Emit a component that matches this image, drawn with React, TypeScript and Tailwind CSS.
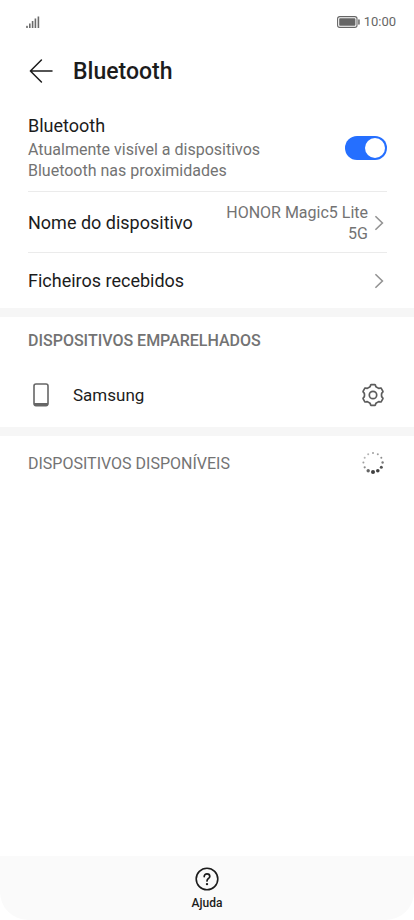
import { useState } from "react";

// Outline of the six-toothed gear, as [angle, radius] pairs for one tooth
const TOOTH: [number, number][] = [
  [-14, 10.1],
  [-10, 10.6],
  [10, 10.6],
  [14, 10.1],
  [18, 9],
  [23, 8.6],
  [37, 8.6],
  [42, 9],
];

const gearPoints = [0, 60, 120, 180, 240, 300]
  .flatMap((turn) =>
    TOOTH.map(([angle, radius]) => {
      const a = ((turn + angle) * Math.PI) / 180;
      return `${(12 + radius * Math.sin(a)).toFixed(2)},${(12 - radius * Math.cos(a)).toFixed(2)}`;
    }),
  )
  .join(" ");

// Dot sizes and opacities, clockwise from the top
const DOTS = [
  [1, 0.5],
  [1, 0.5],
  [1, 0.6],
  [1.2, 0.7],
  [1.5, 0.9],
  [1.8, 1],
  [2, 1],
  [1.7, 0.8],
  [1.1, 0.6],
  [1, 0.5],
  [1, 0.4],
  [1, 0.4],
];

function SignalIcon() {
  return (
    <svg width="14" height="12" viewBox="0 0 14 12" fill="#6b6b6b" aria-hidden="true">
      <rect x="0.2" y="9.8" width="1.6" height="2.2" />
      <rect x="3" y="7.5" width="1.6" height="4.5" />
      <rect x="5.8" y="5" width="1.6" height="7" />
      <rect x="8.6" y="2.5" width="1.6" height="9.5" />
      <rect x="11.6" y="0.5" width="1.6" height="11.5" />
    </svg>
  );
}

function BatteryIcon() {
  return (
    <svg width="24" height="12" viewBox="0 0 24 12" fill="none" aria-hidden="true">
      <rect x="0.6" y="0.6" width="19.4" height="10.8" rx="2.2" stroke="#666" strokeWidth="1.1" />
      <rect x="2.2" y="2.2" width="16.2" height="7.6" rx="0.8" fill="#666" />
      <rect x="21.2" y="3.2" width="1.5" height="5.6" rx="0.7" fill="#666" />
    </svg>
  );
}

function BackIcon() {
  return (
    <svg
      width="24"
      height="24"
      viewBox="0 0 24 24"
      fill="none"
      stroke="#1c1c1c"
      strokeWidth="1.5"
      strokeLinecap="round"
      strokeLinejoin="round"
      aria-hidden="true"
    >
      <path d="M12.4 1L1.4 12L12.4 23M1.4 12H23" />
    </svg>
  );
}

function ChevronIcon() {
  return (
    <svg
      width="10"
      height="16"
      viewBox="0 0 10 16"
      fill="none"
      stroke="#939393"
      strokeWidth="1.6"
      className="shrink-0"
      aria-hidden="true"
    >
      <path d="M1.4 1.2L8.4 8L1.4 14.8" />
    </svg>
  );
}

function PhoneIcon() {
  return (
    <svg width="16" height="24" viewBox="0 0 16 24" fill="none" aria-hidden="true">
      <rect x="1" y="1" width="14" height="21.6" rx="2" stroke="#666" strokeWidth="1.6" />
      <path d="M1 20H15V21A2 2 0 0 1 13 23H3A2 2 0 0 1 1 21Z" fill="#666" />
    </svg>
  );
}

function GearIcon() {
  return (
    <svg
      width="24"
      height="24"
      viewBox="0 0 24 24"
      fill="none"
      stroke="#5c5c5c"
      strokeWidth="1.7"
      strokeLinejoin="round"
      aria-hidden="true"
    >
      <polygon points={gearPoints} />
      <circle cx="12" cy="12" r="3.7" />
    </svg>
  );
}

function Spinner() {
  return (
    <svg width="24" height="24" viewBox="0 0 24 24" fill="#404040" role="status" aria-label="A procurar">
      {DOTS.map(([radius, opacity], i) => (
        <circle
          key={i}
          cx={12 + 9.6 * Math.sin((i * Math.PI) / 6)}
          cy={11.5 - 9.6 * Math.cos((i * Math.PI) / 6)}
          r={radius}
          opacity={opacity}
        />
      ))}
    </svg>
  );
}

function HelpIcon() {
  return (
    <svg
      width="24"
      height="24"
      viewBox="0 0 24 24"
      fill="none"
      stroke="#1c1c1c"
      strokeLinecap="round"
      aria-hidden="true"
    >
      <circle cx="12" cy="12" r="10.8" strokeWidth="1.6" />
      <path d="M9.2 9.6C9.2 7.9 10.4 6.8 12 6.8S14.8 7.9 14.8 9.4C14.8 11.4 12 11.6 12 14" strokeWidth="1.7" />
      <circle cx="12" cy="17.1" r="1.2" fill="#1c1c1c" stroke="none" />
    </svg>
  );
}

export default function App() {
  const [enabled, setEnabled] = useState(true);

  return (
    <div className="flex min-h-screen flex-col bg-white font-['Roboto',sans-serif] text-[#1c1c1c]">
      {/* Status bar */}
      <div className="flex h-11 items-center justify-between pr-[18px] pl-[26px]">
        <SignalIcon />
        <div className="flex items-center gap-[3px]">
          <BatteryIcon />
          <span className="text-[13px] leading-4 text-[#666]">10:00</span>
        </div>
      </div>

      <header className="flex h-[54px] items-center gap-5 px-[29px]">
        <button type="button" aria-label="Voltar">
          <BackIcon />
        </button>
        <h1 className="pt-0.5 text-[23px] leading-7 font-medium">Bluetooth</h1>
      </header>

      <main className="flex-1">
        <section className="pr-[27px] pl-7">
          <label className="flex cursor-pointer items-center justify-between border-b border-[#ebebeb] pt-4 pb-[10px]">
            <span className="flex flex-col gap-px">
              <span className="text-lg leading-6">Bluetooth</span>
              <span className="max-w-[250px] text-base leading-[21px] text-[#737373]">
                Atualmente visível a dispositivos Bluetooth nas proximidades
              </span>
            </span>
            <input
              type="checkbox"
              role="switch"
              checked={enabled}
              onChange={(e) => setEnabled(e.target.checked)}
              className="peer sr-only"
            />
            <span className="flex h-6 w-[42px] shrink-0 items-center rounded-full bg-gray-300 p-0.5 peer-checked:justify-end peer-checked:bg-[#256fff]">
              <span className="size-5 rounded-full bg-white" />
            </span>
          </label>

          <button
            type="button"
            className="flex w-full items-center justify-between border-b border-[#ebebeb] pt-[10px] pb-2 pr-[3px]"
          >
            <span className="text-lg leading-6">Nome do dispositivo</span>
            <span className="flex items-center gap-1.5">
              <span className="max-w-[150px] text-right text-base leading-[21px] text-[#737373]">
                HONOR Magic5 Lite 5G
              </span>
              <ChevronIcon />
            </span>
          </button>

          <button type="button" className="flex h-[55px] w-full items-center justify-between pr-[3px]">
            <span className="text-lg leading-6">Ficheiros recebidos</span>
            <ChevronIcon />
          </button>
        </section>

        <section className="border-t-[9px] border-[#f6f6f6]">
          <h2 className="px-7 pt-3 text-base leading-6 font-medium text-[#737373]">
            DISPOSITIVOS EMPARELHADOS
          </h2>
          <div className="flex h-[74px] items-center justify-between pt-2.5 pr-[29px] pl-[33px]">
            <div className="flex items-center gap-6">
              <PhoneIcon />
              <span className="text-[17px] leading-6">Samsung</span>
            </div>
            <button type="button" aria-label="Definições de Samsung">
              <GearIcon />
            </button>
          </div>
        </section>

        <section className="border-t-[9px] border-[#f6f6f6]">
          <div className="flex items-center justify-between pt-[14px] pr-[29px] pl-7">
            <h2 className="pt-0.5 text-base leading-6 text-[#737373]">DISPOSITIVOS DISPONÍVEIS</h2>
            <Spinner />
          </div>
        </section>
      </main>

      <footer className="flex h-16 justify-center rounded-b-[28px] bg-[#fafafa]">
        <button type="button" className="flex flex-col items-center gap-1 pt-[11px]">
          <HelpIcon />
          <span className="text-xs leading-4 font-medium">Ajuda</span>
        </button>
      </footer>
    </div>
  );
}
